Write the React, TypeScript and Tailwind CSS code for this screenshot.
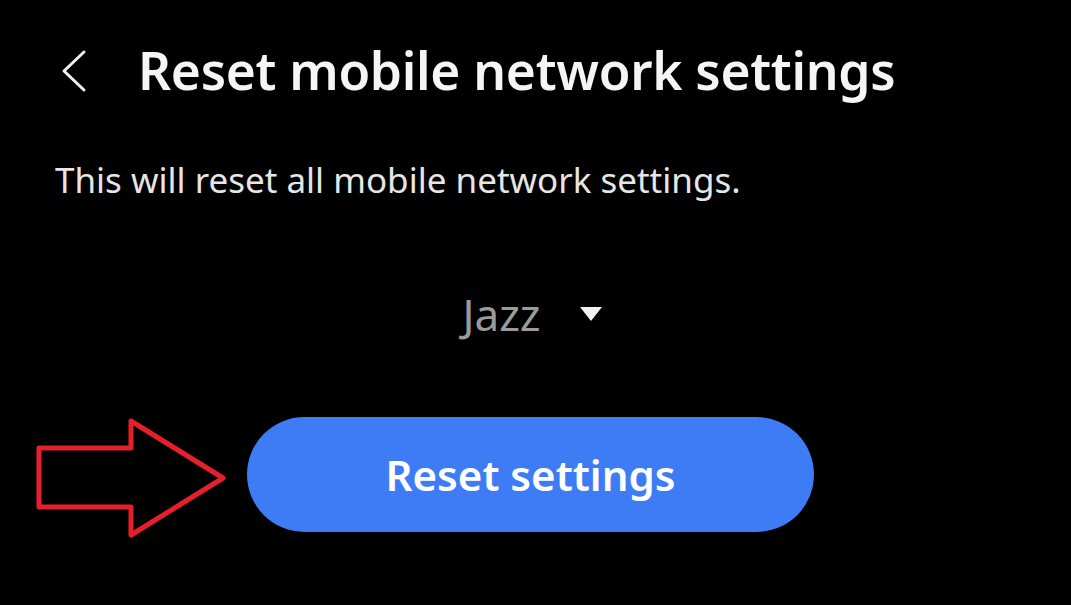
import React from "react";

export default function App() {
  return (
    <div
      className="relative w-[1071px] h-[605px] bg-black overflow-hidden text-white"
      style={{ fontFamily: '"Noto Sans", "Open Sans", sans-serif' }}
    >
      <div className="flex items-center pl-[59px] pt-[30px] h-[112px]">
        <svg width="30" height="44" viewBox="0 0 30 44" className="shrink-0">
          <path d="M25 3 L5 22 L25 41" fill="none" stroke="#f2f2f2" strokeWidth="3" strokeLinecap="round" strokeLinejoin="round" />
        </svg>
        <h1 className="ml-[49px] text-[51.5px] font-semibold leading-none tracking-[-0.3px] text-[#f5f5f5]">
          Reset mobile network settings
        </h1>
      </div>
      <p className="pl-[55px] mt-[50px] text-[35px] leading-none text-[#e6e6e6]">
        This will reset all mobile network settings.
      </p>
      <div className="flex items-center justify-center gap-[38px] mt-[95px] pr-[6px]">
        <span className="text-[44px] leading-none text-[#9b9b9b]">Jazz</span>
        <svg width="24" height="16" viewBox="0 0 24 16">
          <path d="M1 1 H23 L12 15 Z" fill="#f0f0f0" />
        </svg>
      </div>
      <div className="mt-[81px] ml-[247px] w-[567px] h-[115px] rounded-full bg-[#3e7cf6] flex items-center justify-center">
        <span className="text-[42px] font-semibold text-white leading-none">Reset settings</span>
      </div>
      <svg
        className="absolute left-[34px] top-[416px]"
        width="196"
        height="124"
        viewBox="34 416 196 124"
      >
        <path
          d="M39 448 H131 V421 L223 478 L131 535 V507 H39 Z"
          fill="none"
          stroke="#e5202a"
          strokeWidth="5"
          strokeLinejoin="round"
        />
      </svg>
    </div>
  );
}
